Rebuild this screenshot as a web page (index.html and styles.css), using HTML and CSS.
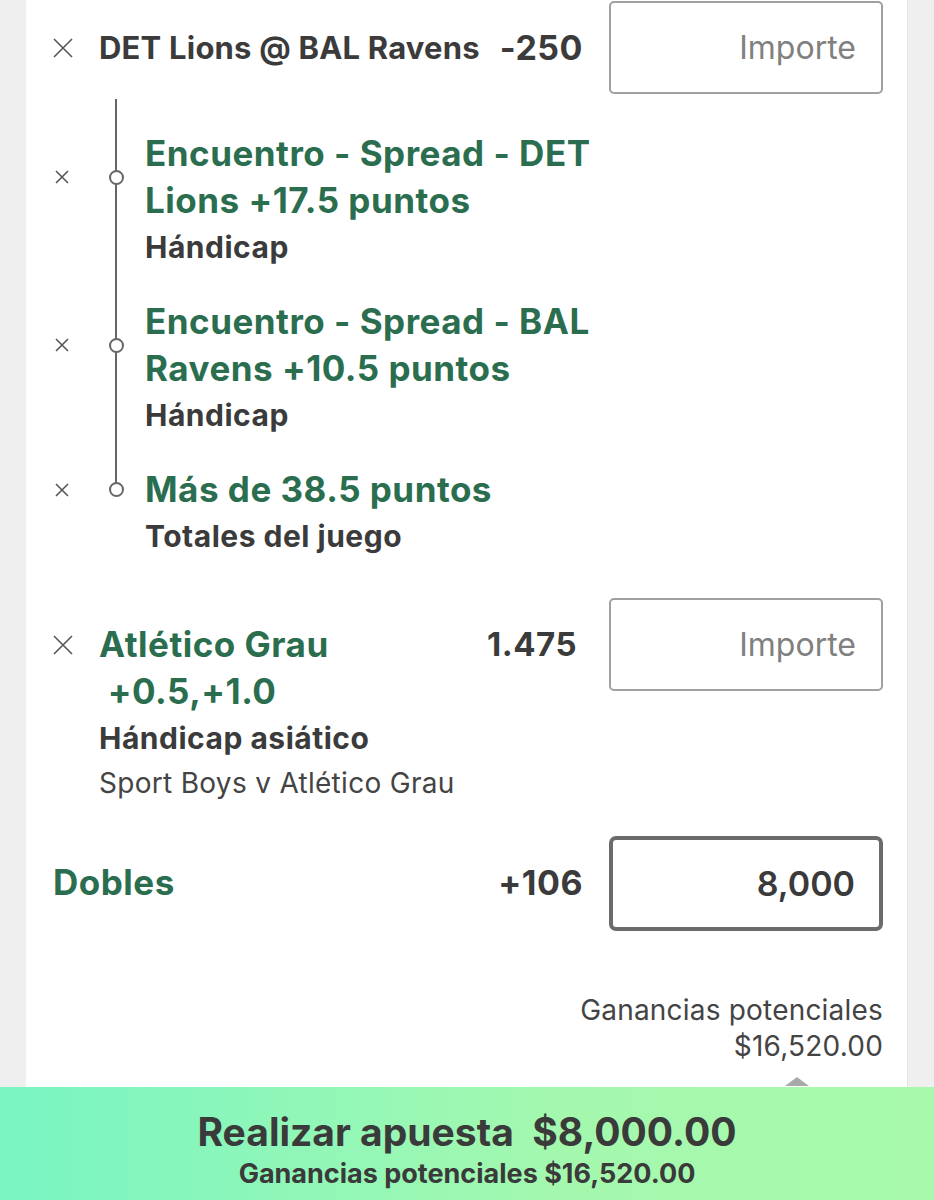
FILE: index.html
```html
<!DOCTYPE html>
<html lang="es">
<head>
  <meta charset="UTF-8" />
  <title>Boleto de apuestas</title>
  <link rel="stylesheet" href="styles.css">
</head>
<body>
  <div class="card">

    <div class="bet">
      <button class="close"><svg viewBox="0 0 20 20"><path d="M1 1L19 19M19 1L1 19"/></svg></button>
      <div class="info">
        <div class="event">DET Lions @ BAL Ravens</div>
      </div>
      <div class="odds">-250</div>
      <input class="stake" placeholder="Importe">
    </div>

    <div class="legs">
      <div class="leg">
        <button class="leg-close"><svg viewBox="0 0 14 14"><path d="M1 1L13 13M13 1L1 13"/></svg></button>
        <span class="dot"></span>
        <div class="leg-title">Encuentro - Spread - DET<br>Lions +17.5 puntos</div>
        <div class="market">Hándicap</div>
      </div>
      <div class="leg">
        <button class="leg-close"><svg viewBox="0 0 14 14"><path d="M1 1L13 13M13 1L1 13"/></svg></button>
        <span class="dot"></span>
        <div class="leg-title">Encuentro - Spread - BAL<br>Ravens +10.5 puntos</div>
        <div class="market">Hándicap</div>
      </div>
      <div class="leg">
        <button class="leg-close"><svg viewBox="0 0 14 14"><path d="M1 1L13 13M13 1L1 13"/></svg></button>
        <span class="dot"></span>
        <div class="leg-title">Más de 38.5 puntos</div>
        <div class="market">Totales del juego</div>
      </div>
    </div>

    <div class="bet single">
      <button class="close"><svg viewBox="0 0 20 20"><path d="M1 1L19 19M19 1L1 19"/></svg></button>
      <div class="info">
        <div class="selection">Atlético Grau<br>&nbsp;+0.5,+1.0</div>
        <div class="market">Hándicap asiático</div>
        <div class="match">Sport Boys v Atlético Grau</div>
      </div>
      <div class="odds">1.475</div>
      <input class="stake" placeholder="Importe">
    </div>

    <div class="bet multiple">
      <div class="info">
        <div class="selection">Dobles</div>
      </div>
      <div class="odds">+106</div>
      <input class="stake active" value="8,000">
    </div>

    <div class="returns">
      <div>Ganancias potenciales</div>
      <div>$16,520.00</div>
      <span class="pointer"></span>
    </div>
  </div>

  <button class="place-bet">
    <span class="place-main">Realizar apuesta&nbsp;&nbsp;$8,000.00</span>
    <span class="place-sub">Ganancias potenciales $16,520.00</span>
  </button>
</body>
</html>
```

FILE: styles.css
```css
body {
  margin: 0;
  background-color: #efefef;
  font-family: Inter, "Liberation Sans", sans-serif;
  color: #3b3b3b;
}
.card {
  margin-left: 26px;
  width: 882px;
  height: 1087px;
  box-sizing: border-box;
  padding: 1px 24px 0 27px;
  background-color: #fff;
  border-right: 1px solid #e4e4e4;
}
button {
  border: none;
  background: none;
  padding: 0;
  font-family: inherit;
}

/* fila de apuesta: X | texto | cuota | importe */
.bet {
  display: flex;
  align-items: flex-start;
}
.close {
  width: 46px;
  height: 47px;
  margin-top: 23px;
  display: flex;
  align-items: center;
}
.close svg {
  width: 20px;
  height: 20px;
}
svg path {
  stroke: #555;
  stroke-width: 1.6;
  fill: none;
}
.info {
  flex: 1;
  padding-top: 23px;
  line-height: 47px;
}
.event {
  font-size: 31px;
  font-weight: 700;
  letter-spacing: 0.2px;
}
.selection {
  font-size: 35px;
  font-weight: 700;
  letter-spacing: 0.5px;
  color: #2b6e4f;
}
.odds {
  padding-top: 23px;
  line-height: 47px;
  font-size: 34px;
  font-weight: 700;
  letter-spacing: 0.5px;
  margin-right: 26px;
}
.single .odds {
  font-size: 33px;
  margin-right: 32px;
}
.stake {
  width: 274px;
  height: 93px;
  box-sizing: border-box;
  border: 2px solid #a0a0a0;
  border-radius: 5px;
  padding: 0 25px 0 0;
  text-align: right;
  font-family: inherit;
  font-size: 32px;
  color: #3a3a3a;
}
.stake::placeholder {
  color: #808080;
}
.stake.active {
  height: 95px;
  border: 4px solid #6b6b6b;
  border-radius: 7px;
  padding-right: 24px;
  font-weight: 600;
  font-size: 34px;
}
.market {
  font-size: 30px;
  font-weight: 700;
  letter-spacing: 0.5px;
  line-height: 47px;
}
.match {
  font-size: 28px;
  letter-spacing: 0.3px;
  line-height: 42px;
  color: #444;
}
.single {
  margin-top: 38px;
}
.multiple {
  margin-top: 32px;
}

/* combinada con línea de tiempo */
.legs {
  position: relative;
  margin-top: 5px;
  padding-top: 31px;
}
.legs::before {
  content: "";
  position: absolute;
  left: 62px;
  top: 0;
  bottom: 70px;
  width: 2px;
  background-color: #666;
}
.leg {
  display: grid;
  grid-template-columns: 18px 30px 1fr;
  column-gap: 30px;
  align-items: center;
  margin-bottom: 27px;
}
.leg:last-child {
  margin-bottom: 0;
}
.leg > .leg-close, .leg > .dot, .leg > .leg-title {
  grid-row: 1;
}
.leg-close {
  display: flex;
  justify-content: center;
}
.leg-close svg {
  width: 14px;
  height: 14px;
}
.dot {
  position: relative;
  justify-self: center;
  width: 11px;
  height: 11px;
  border: 2px solid #666;
  border-radius: 50%;
  background-color: #fff;
}
.leg-title {
  margin-left: -16px;
  font-size: 35px;
  font-weight: 700;
  letter-spacing: 0.5px;
  line-height: 47px;
  color: #2b6e4f;
}
.leg .market {
  grid-column: 3;
  margin-left: -16px;
}

.returns {
  position: relative;
  margin-top: 61px;
  text-align: right;
  font-size: 28px;
  letter-spacing: 0.2px;
  line-height: 36px;
  color: #444;
}
.pointer {
  position: absolute;
  right: 74px;
  bottom: -22px;
  border: 12px solid transparent;
  border-bottom: 9px solid #a9a9a9;
  border-top: none;
}

.place-bet {
  display: flex;
  flex-direction: column;
  align-items: center;
  width: 100%;
  height: 113px;
  padding-top: 21px;
  box-sizing: border-box;
  background: linear-gradient(to right, #79f5c3, #a4f8ae 60%, #a8f9ab);
  color: #3a3a3a;
  font-weight: 700;
}
.place-main {
  font-size: 39px;
  line-height: 47px;
}
.place-sub {
  font-size: 27px;
  line-height: 38px;
}
```
